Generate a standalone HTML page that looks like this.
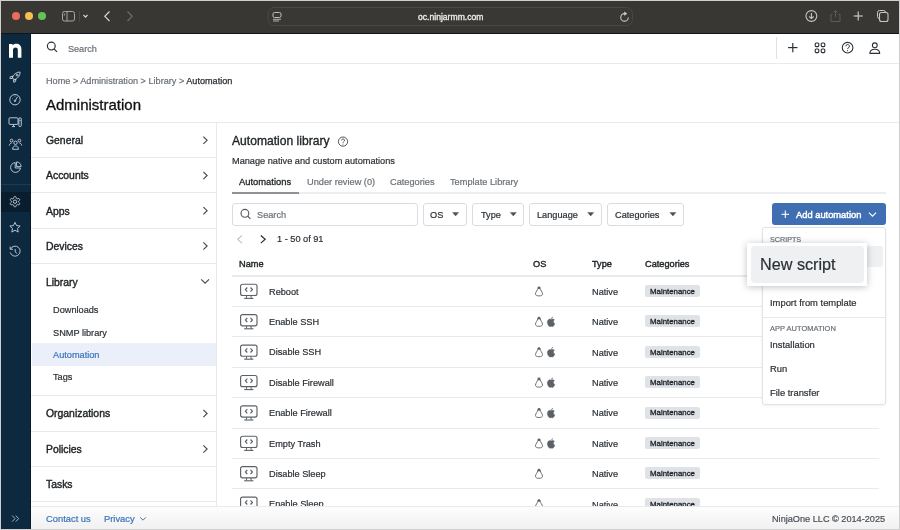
<!DOCTYPE html>
<html><head><meta charset="utf-8">
<style>
*{box-sizing:border-box;margin:0;padding:0}
html,body{width:900px;height:530px;overflow:hidden;background:#fff}
body{position:relative;font-family:"Liberation Sans",sans-serif;color:#23272b}
.a{position:absolute}
.t{will-change:transform;position:absolute;white-space:nowrap;line-height:1;-webkit-text-stroke:0.2px currentColor}
svg{position:absolute;overflow:visible}
</style></head>
<body>
<div class="a" style="left:0px;top:0px;width:900px;height:530px;background:#cfcfcf;"></div>
<div class="a" style="left:1px;top:1px;width:898px;height:528px;background:#fff;"></div>
<div class="a" style="left:1px;top:1px;width:898px;height:32px;background:#383734;"></div>
<div class="a" style="left:1px;top:33px;width:898px;height:1px;background:#0b1621;"></div>
<div class="a" style="left:12.4px;top:12.4px;width:8px;height:8px;border-radius:50%;background:#ec6a5e"></div>
<div class="a" style="left:25.1px;top:12.4px;width:8px;height:8px;border-radius:50%;background:#f4bf4f"></div>
<div class="a" style="left:37.9px;top:12.4px;width:8px;height:8px;border-radius:50%;background:#61c454"></div>
<svg style="left:0px;top:0px" width="900" height="33" viewBox="0 0 900 33">
 <rect x="62.5" y="11.5" width="12" height="9.5" rx="2" fill="none" stroke="#a9a7a4" stroke-width="1"/>
 <line x1="67" y1="11.5" x2="67" y2="21" stroke="#a9a7a4" stroke-width="1"/>
 <line x1="64.3" y1="13.5" x2="64.3" y2="15.5" stroke="#a9a7a4" stroke-width="1"/>
 <line x1="79.5" y1="11" x2="79.5" y2="22" stroke="#4a4846" stroke-width="1"/>
 <polyline points="83.5,15 85.5,17.2 87.5,15" fill="none" stroke="#d8d6d3" stroke-width="1.2"/>
 <polyline points="109.5,11.5 104.8,16.3 109.5,21" fill="none" stroke="#d8d6d3" stroke-width="1.2"/>
 <polyline points="127.5,11.5 132.2,16.3 127.5,21" fill="none" stroke="#6e6c69" stroke-width="1.2"/>
 <rect x="268" y="7.5" width="364.5" height="18" rx="6" fill="#3a3836" stroke="#4a4846" stroke-width="1"/>
 <rect x="273" y="12.5" width="8" height="5" rx="1.5" fill="none" stroke="#bdbbb8" stroke-width="1"/>
 <line x1="273" y1="19.3" x2="281" y2="19.3" stroke="#bdbbb8" stroke-width="0.9"/>
 <line x1="273" y1="21" x2="279" y2="21" stroke="#bdbbb8" stroke-width="0.9"/>
 <path d="M628.25,17.4 A3.75,3.75 0 1 1 624.5,13.65" fill="none" stroke="#c9c7c4" stroke-width="1.1"/>
 <path d="M624.2,11.6 L627.2,13.65 L624.2,15.7 z" fill="#d5d3d0"/>
 <circle cx="811.4" cy="16" r="5.4" fill="none" stroke="#c9c7c4" stroke-width="1.1"/>
 <line x1="811.4" y1="13" x2="811.4" y2="18.5" stroke="#c9c7c4" stroke-width="1.1"/>
 <polyline points="809.2,16.5 811.4,18.6 813.6,16.5" fill="none" stroke="#c9c7c4" stroke-width="1.1"/>
 <path d="M832.5,14.5 h-1.5 v7 h9 v-7 h-1.5" fill="none" stroke="#5e5c59" stroke-width="1"/>
 <line x1="835.5" y1="10.5" x2="835.5" y2="17" stroke="#5e5c59" stroke-width="1"/>
 <polyline points="833.5,12.5 835.5,10.5 837.5,12.5" fill="none" stroke="#5e5c59" stroke-width="1"/>
 <line x1="858.2" y1="11.5" x2="858.2" y2="20.5" stroke="#c9c7c4" stroke-width="1.2"/>
 <line x1="853.7" y1="16" x2="862.7" y2="16" stroke="#c9c7c4" stroke-width="1.2"/>
 <rect x="877.5" y="10.5" width="8" height="8" rx="2" fill="none" stroke="#c9c7c4" stroke-width="1"/>
 <rect x="879.5" y="12.5" width="8.5" height="9" rx="2" fill="#383734" stroke="#c9c7c4" stroke-width="1.1"/>
</svg>
<div class="t" style="left:418.00px;top:13px;font-size:8.6px;color:#f0efed;font-weight:400;-webkit-text-stroke:0.3px #f0efed">oc.ninjarmm.com</div>
<div class="a" style="left:1px;top:34px;width:29px;height:495px;background:#0c2940;"></div>
<div class="a" style="left:30px;top:34px;width:1px;height:495px;background:#08192a;"></div>
<div class="a" style="left:1px;top:184px;width:30px;height:1px;background:#1d3a52;"></div>
<div class="a" style="left:1px;top:192px;width:30px;height:20px;background:#081d2e;"></div>
<div class="a" style="left:32px;top:63px;width:867px;height:1px;background:#e8eaed;"></div>
<div class="t" style="left:68.00px;top:45px;font-size:9.1px;color:#6a7077;font-weight:400;">Search</div>
<div class="a" style="left:776px;top:37px;width:1px;height:22px;background:#dfe2e5;"></div>
<div class="t" style="left:46.00px;top:77px;font-size:9.15px;color:#6a7077;font-weight:400;">Home &gt; Administration &gt; Library &gt; <span style="color:#2b3035;-webkit-text-stroke:0.25px #2b3035">Automation</span></div>
<div class="t" style="left:46.00px;top:97px;font-size:15px;color:#111;font-weight:400;-webkit-text-stroke:0.3px #111">Administration</div>
<div class="a" style="left:31px;top:122px;width:868px;height:1px;background:#e8eaed;"></div>
<div class="a" style="left:216px;top:123px;width:1px;height:383px;background:#e8eaed;"></div>
<div class="t" style="left:45.60px;top:136px;font-size:10.4px;color:#1f2326;font-weight:400;-webkit-text-stroke:0.4px #1f2326">General</div>
<div class="a" style="left:31px;top:122px;width:185px;height:1px;background:#e8eaed;"></div>
<div class="t" style="left:45.60px;top:171px;font-size:10.4px;color:#1f2326;font-weight:400;-webkit-text-stroke:0.4px #1f2326">Accounts</div>
<div class="a" style="left:31px;top:157px;width:185px;height:1px;background:#e8eaed;"></div>
<div class="t" style="left:45.60px;top:207px;font-size:10.4px;color:#1f2326;font-weight:400;-webkit-text-stroke:0.4px #1f2326">Apps</div>
<div class="a" style="left:31px;top:192px;width:185px;height:1px;background:#e8eaed;"></div>
<div class="t" style="left:45.60px;top:242px;font-size:10.4px;color:#1f2326;font-weight:400;-webkit-text-stroke:0.4px #1f2326">Devices</div>
<div class="a" style="left:31px;top:228px;width:185px;height:1px;background:#e8eaed;"></div>
<div class="t" style="left:45.60px;top:278px;font-size:10.4px;color:#1f2326;font-weight:400;-webkit-text-stroke:0.4px #1f2326">Library</div>
<div class="a" style="left:31px;top:263px;width:185px;height:1px;background:#e8eaed;"></div>
<div class="a" style="left:31px;top:395px;width:185px;height:1px;background:#e8eaed;"></div>
<div class="a" style="left:32px;top:343px;width:184px;height:23px;background:#eaeff9;"></div>
<div class="t" style="left:53.20px;top:306px;font-size:9.2px;color:#2b3035;font-weight:400;">Downloads</div>
<div class="t" style="left:53.20px;top:329px;font-size:9.2px;color:#2b3035;font-weight:400;">SNMP library</div>
<div class="t" style="left:53.20px;top:351px;font-size:9.2px;color:#3b73b9;font-weight:400;">Automation</div>
<div class="t" style="left:53.20px;top:373px;font-size:9.2px;color:#2b3035;font-weight:400;">Tags</div>
<div class="t" style="left:45.60px;top:409px;font-size:10.4px;color:#1f2326;font-weight:400;-webkit-text-stroke:0.4px #1f2326">Organizations</div>
<div class="a" style="left:31px;top:395px;width:185px;height:1px;background:#e8eaed;"></div>
<div class="t" style="left:45.60px;top:445px;font-size:10.4px;color:#1f2326;font-weight:400;-webkit-text-stroke:0.4px #1f2326">Policies</div>
<div class="a" style="left:31px;top:431px;width:185px;height:1px;background:#e8eaed;"></div>
<div class="t" style="left:45.60px;top:480px;font-size:10.4px;color:#1f2326;font-weight:400;-webkit-text-stroke:0.4px #1f2326">Tasks</div>
<div class="a" style="left:31px;top:466px;width:185px;height:1px;background:#e8eaed;"></div>
<div class="a" style="left:31px;top:501px;width:185px;height:1px;background:#e8eaed;"></div>
<div class="t" style="left:232.00px;top:135px;font-size:12.1px;color:#1f2326;font-weight:400;-webkit-text-stroke:0.35px #1f2326">Automation library</div>
<svg style="left:0px;top:0px" width="900" height="530" viewBox="0 0 900 530"><circle cx="343" cy="141.6" r="4.6" fill="none" stroke="#3d4247" stroke-width="0.9"/><path d="M341.6,140.4 a1.45,1.45 0 1 1 2.1,1.3 c-0.5,0.25 -0.7,0.5 -0.7,1" fill="none" stroke="#3d4247" stroke-width="0.85"/><circle cx="343" cy="144" r="0.5" fill="#3d4247"/></svg>
<div class="t" style="left:232.00px;top:157px;font-size:9.2px;color:#2b3035;font-weight:400;">Manage native and custom automations</div>
<div class="a" style="left:232px;top:192px;width:654px;height:2px;background:#eceef0;"></div>
<div class="a" style="left:232px;top:192px;width:67px;height:2px;background:#8f9296;"></div>
<div class="t" style="left:239.20px;top:177px;font-size:9.4px;color:#1f2326;font-weight:400;-webkit-text-stroke:0.3px #1f2326">Automations</div>
<div class="t" style="left:306.70px;top:178px;font-size:9.23px;color:#6b7177;font-weight:400;">Under review (0)</div>
<div class="t" style="left:390.40px;top:178px;font-size:9.23px;color:#6b7177;font-weight:400;">Categories</div>
<div class="t" style="left:450.40px;top:178px;font-size:9.23px;color:#6b7177;font-weight:400;">Template Library</div>
<div class="a" style="left:232px;top:203px;width:185.5px;height:22.5px;background:#fff;border:1px solid #d9dde1;border-radius:3px"></div>
<div class="a" style="left:422.7px;top:203px;width:44.0px;height:22.5px;background:#fff;border:1px solid #d9dde1;border-radius:3px"></div>
<div class="a" style="left:472.2px;top:203px;width:51.599999999999966px;height:22.5px;background:#fff;border:1px solid #d9dde1;border-radius:3px"></div>
<div class="a" style="left:529.3px;top:203px;width:72.30000000000007px;height:22.5px;background:#fff;border:1px solid #d9dde1;border-radius:3px"></div>
<div class="a" style="left:607.3px;top:203px;width:76.5px;height:22.5px;background:#fff;border:1px solid #d9dde1;border-radius:3px"></div>
<svg style="left:0px;top:0px" width="900" height="530" viewBox="0 0 900 530"><circle cx="244.9" cy="213.3" r="3.9" fill="none" stroke="#50565c" stroke-width="1.1"/><line x1="247.7" y1="216.1" x2="250.4" y2="218.9" stroke="#50565c" stroke-width="1.2"/></svg>
<div class="t" style="left:256.80px;top:211px;font-size:9.2px;color:#6b7177;font-weight:400;">Search</div>
<div class="t" style="left:430.40px;top:211px;font-size:9.2px;color:#2b3035;font-weight:400;">OS</div>
<svg style="left:0px;top:0px" width="900" height="530" viewBox="0 0 900 530"><path d="M452.6,212.6 h6 l-3,3.4 z" fill="#4a5056" stroke="#4a5056" stroke-width="0.4" stroke-linejoin="round"/></svg>
<div class="t" style="left:480.50px;top:211px;font-size:9.2px;color:#2b3035;font-weight:400;">Type</div>
<svg style="left:0px;top:0px" width="900" height="530" viewBox="0 0 900 530"><path d="M510.29999999999995,212.6 h6 l-3,3.4 z" fill="#4a5056" stroke="#4a5056" stroke-width="0.4" stroke-linejoin="round"/></svg>
<div class="t" style="left:537.30px;top:211px;font-size:9.2px;color:#2b3035;font-weight:400;">Language</div>
<svg style="left:0px;top:0px" width="900" height="530" viewBox="0 0 900 530"><path d="M587.7,212.6 h6 l-3,3.4 z" fill="#4a5056" stroke="#4a5056" stroke-width="0.4" stroke-linejoin="round"/></svg>
<div class="t" style="left:615.10px;top:211px;font-size:9.2px;color:#2b3035;font-weight:400;">Categories</div>
<svg style="left:0px;top:0px" width="900" height="530" viewBox="0 0 900 530"><path d="M669.9,212.6 h6 l-3,3.4 z" fill="#4a5056" stroke="#4a5056" stroke-width="0.4" stroke-linejoin="round"/></svg>
<div class="a" style="left:772px;top:203.3px;width:114px;height:22px;background:#3f6fb2;border-radius:3px"></div>
<svg style="left:0px;top:0px" width="900" height="530" viewBox="0 0 900 530"><line x1="785.3" y1="210.6" x2="785.3" y2="218" stroke="#fff" stroke-width="1.1"/><line x1="781.6" y1="214.3" x2="789" y2="214.3" stroke="#fff" stroke-width="1.1"/><polyline points="868.9,212.6 872.5,216.2 876.1,212.6" fill="none" stroke="#fff" stroke-width="1.1"/></svg>
<div class="t" style="left:796.00px;top:211px;font-size:9.33px;color:#fff;font-weight:400;-webkit-text-stroke:0.45px #fff">Add automation</div>
<svg style="left:0px;top:0px" width="900" height="530" viewBox="0 0 900 530"><polyline points="242,235.5 237.6,239.3 242,243.1" fill="none" stroke="#a3a9af" stroke-width="1"/><polyline points="260.8,235.5 265.2,239.3 260.8,243.1" fill="none" stroke="#2b2f33" stroke-width="1.2"/></svg>
<div class="t" style="left:276.50px;top:235px;font-size:9.2px;color:#2b3035;font-weight:400;">1 - 50 of 91</div>
<div class="t" style="left:239.00px;top:260px;font-size:9.2px;color:#1f2326;font-weight:400;-webkit-text-stroke:0.4px #1f2326">Name</div>
<div class="t" style="left:532.90px;top:260px;font-size:9.2px;color:#1f2326;font-weight:400;-webkit-text-stroke:0.4px #1f2326">OS</div>
<div class="t" style="left:591.60px;top:260px;font-size:9.2px;color:#1f2326;font-weight:400;-webkit-text-stroke:0.4px #1f2326">Type</div>
<div class="t" style="left:644.90px;top:260px;font-size:9.2px;color:#1f2326;font-weight:400;-webkit-text-stroke:0.4px #1f2326">Categories</div>
<div class="a" style="left:232px;top:275px;width:647px;height:2px;background:#e8eaed;"></div>
<div class="a" style="left:232px;top:306px;width:647px;height:1px;background:#e8eaed;"></div>
<div class="t" style="left:268.70px;top:288px;font-size:9.2px;color:#2b3035;font-weight:400;">Reboot</div>
<div class="t" style="left:591.70px;top:288px;font-size:9.2px;color:#2b3035;font-weight:400;">Native</div>
<div class="a" style="left:645px;top:285px;width:55px;height:12px;background:#dfe3e8;border-radius:2px"></div>
<div class="t" style="left:650.00px;top:288px;font-size:7.85px;color:#1c2024;font-weight:400;-webkit-text-stroke:0.3px #1c2024">Maintenance</div>
<svg style="left:0px;top:0px" width="900" height="530" viewBox="0 0 900 530"><rect x="240.6" y="284.25" width="16.4" height="11.2" rx="2" fill="none" stroke="#5b6167" stroke-width="1.15"/><polyline points="247.3,287.50 245.4,289.60 247.3,291.70" fill="none" stroke="#5b6167" stroke-width="1.2"/><polyline points="250.5,287.50 252.4,289.60 250.5,291.70" fill="none" stroke="#5b6167" stroke-width="1.2"/><path d="M246.9,295.40 L246.2,298.20 M250.7,295.40 L251.4,298.20" fill="none" stroke="#5b6167" stroke-width="1"/><line x1="244.2" y1="298.40" x2="253.4" y2="298.40" stroke="#5b6167" stroke-width="1.1"/></svg>
<svg style="left:0px;top:0px" width="900" height="530" viewBox="0 0 900 530"><ellipse cx="539" cy="287.8" rx="1.5" ry="1.4" fill="#5b6167"/><path d="M537.7,288.4 C537.7,290.2 535.5,291.7 535.5,293.9 C535.5,295.4 537,295.9 539,295.9 C541,295.9 542.5,295.4 542.5,293.9 C542.5,291.7 540.3,290.2 540.3,288.4" fill="none" stroke="#5b6167" stroke-width="0.9"/></svg>
<div class="a" style="left:232px;top:336px;width:647px;height:1px;background:#e8eaed;"></div>
<div class="t" style="left:268.70px;top:318px;font-size:9.2px;color:#2b3035;font-weight:400;">Enable SSH</div>
<div class="t" style="left:591.70px;top:318px;font-size:9.2px;color:#2b3035;font-weight:400;">Native</div>
<div class="a" style="left:645px;top:315px;width:55px;height:12px;background:#dfe3e8;border-radius:2px"></div>
<div class="t" style="left:650.00px;top:318px;font-size:7.85px;color:#1c2024;font-weight:400;-webkit-text-stroke:0.3px #1c2024">Maintenance</div>
<svg style="left:0px;top:0px" width="900" height="530" viewBox="0 0 900 530"><rect x="240.6" y="314.65" width="16.4" height="11.2" rx="2" fill="none" stroke="#5b6167" stroke-width="1.15"/><polyline points="247.3,317.90 245.4,320.00 247.3,322.10" fill="none" stroke="#5b6167" stroke-width="1.2"/><polyline points="250.5,317.90 252.4,320.00 250.5,322.10" fill="none" stroke="#5b6167" stroke-width="1.2"/><path d="M246.9,325.80 L246.2,328.60 M250.7,325.80 L251.4,328.60" fill="none" stroke="#5b6167" stroke-width="1"/><line x1="244.2" y1="328.80" x2="253.4" y2="328.80" stroke="#5b6167" stroke-width="1.1"/></svg>
<svg style="left:0px;top:0px" width="900" height="530" viewBox="0 0 900 530"><ellipse cx="539" cy="318.2" rx="1.5" ry="1.4" fill="#5b6167"/><path d="M537.7,318.8 C537.7,320.6 535.5,322.1 535.5,324.3 C535.5,325.8 537,326.3 539,326.3 C541,326.3 542.5,325.8 542.5,324.3 C542.5,322.1 540.3,320.6 540.3,318.8" fill="none" stroke="#5b6167" stroke-width="0.9"/></svg>
<svg style="left:0px;top:0px" width="900" height="530" viewBox="0 0 900 530"><path d="M551.4,319.4 c0.9,-0.6 2.2,-0.5 3,0.3 c-1.6,1 -1.3,3.3 0.4,4 c-0.5,1.4 -1.4,2.9 -2.5,2.9 c-0.6,0 -0.8,-0.3 -1.1,-0.3 c-0.3,0 -0.6,0.3 -1.1,0.3 c-1.3,0 -2.7,-2.4 -2.7,-4.4 c0,-2.4 1.7,-3.2 2.6,-3.2 c0.5,0 0.9,0.35 1.4,0.4 z M551.5,318.9 c0,-0.9 0.6,-1.8 1.5,-2" fill="#5b6167" stroke="#5b6167" stroke-width="0.5"/></svg>
<div class="a" style="left:232px;top:367px;width:647px;height:1px;background:#e8eaed;"></div>
<div class="t" style="left:268.70px;top:348px;font-size:9.2px;color:#2b3035;font-weight:400;">Disable SSH</div>
<div class="t" style="left:591.70px;top:349px;font-size:9.2px;color:#2b3035;font-weight:400;">Native</div>
<div class="a" style="left:645px;top:346px;width:55px;height:12px;background:#dfe3e8;border-radius:2px"></div>
<div class="t" style="left:650.00px;top:349px;font-size:7.85px;color:#1c2024;font-weight:400;-webkit-text-stroke:0.3px #1c2024">Maintenance</div>
<svg style="left:0px;top:0px" width="900" height="530" viewBox="0 0 900 530"><rect x="240.6" y="345.05" width="16.4" height="11.2" rx="2" fill="none" stroke="#5b6167" stroke-width="1.15"/><polyline points="247.3,348.30 245.4,350.40 247.3,352.50" fill="none" stroke="#5b6167" stroke-width="1.2"/><polyline points="250.5,348.30 252.4,350.40 250.5,352.50" fill="none" stroke="#5b6167" stroke-width="1.2"/><path d="M246.9,356.20 L246.2,359.00 M250.7,356.20 L251.4,359.00" fill="none" stroke="#5b6167" stroke-width="1"/><line x1="244.2" y1="359.20" x2="253.4" y2="359.20" stroke="#5b6167" stroke-width="1.1"/></svg>
<svg style="left:0px;top:0px" width="900" height="530" viewBox="0 0 900 530"><ellipse cx="539" cy="348.6" rx="1.5" ry="1.4" fill="#5b6167"/><path d="M537.7,349.2 C537.7,351.0 535.5,352.5 535.5,354.7 C535.5,356.2 537,356.7 539,356.7 C541,356.7 542.5,356.2 542.5,354.7 C542.5,352.5 540.3,351.0 540.3,349.2" fill="none" stroke="#5b6167" stroke-width="0.9"/></svg>
<svg style="left:0px;top:0px" width="900" height="530" viewBox="0 0 900 530"><path d="M551.4,349.8 c0.9,-0.6 2.2,-0.5 3,0.3 c-1.6,1 -1.3,3.3 0.4,4 c-0.5,1.4 -1.4,2.9 -2.5,2.9 c-0.6,0 -0.8,-0.3 -1.1,-0.3 c-0.3,0 -0.6,0.3 -1.1,0.3 c-1.3,0 -2.7,-2.4 -2.7,-4.4 c0,-2.4 1.7,-3.2 2.6,-3.2 c0.5,0 0.9,0.35 1.4,0.4 z M551.5,349.3 c0,-0.9 0.6,-1.8 1.5,-2" fill="#5b6167" stroke="#5b6167" stroke-width="0.5"/></svg>
<div class="a" style="left:232px;top:397px;width:647px;height:1px;background:#e8eaed;"></div>
<div class="t" style="left:268.70px;top:379px;font-size:9.2px;color:#2b3035;font-weight:400;">Disable Firewall</div>
<div class="t" style="left:591.70px;top:379px;font-size:9.2px;color:#2b3035;font-weight:400;">Native</div>
<div class="a" style="left:645px;top:376px;width:55px;height:12px;background:#dfe3e8;border-radius:2px"></div>
<div class="t" style="left:650.00px;top:379px;font-size:7.85px;color:#1c2024;font-weight:400;-webkit-text-stroke:0.3px #1c2024">Maintenance</div>
<svg style="left:0px;top:0px" width="900" height="530" viewBox="0 0 900 530"><rect x="240.6" y="375.45" width="16.4" height="11.2" rx="2" fill="none" stroke="#5b6167" stroke-width="1.15"/><polyline points="247.3,378.70 245.4,380.80 247.3,382.90" fill="none" stroke="#5b6167" stroke-width="1.2"/><polyline points="250.5,378.70 252.4,380.80 250.5,382.90" fill="none" stroke="#5b6167" stroke-width="1.2"/><path d="M246.9,386.60 L246.2,389.40 M250.7,386.60 L251.4,389.40" fill="none" stroke="#5b6167" stroke-width="1"/><line x1="244.2" y1="389.60" x2="253.4" y2="389.60" stroke="#5b6167" stroke-width="1.1"/></svg>
<svg style="left:0px;top:0px" width="900" height="530" viewBox="0 0 900 530"><ellipse cx="539" cy="379.0" rx="1.5" ry="1.4" fill="#5b6167"/><path d="M537.7,379.6 C537.7,381.4 535.5,382.9 535.5,385.1 C535.5,386.6 537,387.1 539,387.1 C541,387.1 542.5,386.6 542.5,385.1 C542.5,382.9 540.3,381.4 540.3,379.6" fill="none" stroke="#5b6167" stroke-width="0.9"/></svg>
<svg style="left:0px;top:0px" width="900" height="530" viewBox="0 0 900 530"><path d="M551.4,380.2 c0.9,-0.6 2.2,-0.5 3,0.3 c-1.6,1 -1.3,3.3 0.4,4 c-0.5,1.4 -1.4,2.9 -2.5,2.9 c-0.6,0 -0.8,-0.3 -1.1,-0.3 c-0.3,0 -0.6,0.3 -1.1,0.3 c-1.3,0 -2.7,-2.4 -2.7,-4.4 c0,-2.4 1.7,-3.2 2.6,-3.2 c0.5,0 0.9,0.35 1.4,0.4 z M551.5,379.7 c0,-0.9 0.6,-1.8 1.5,-2" fill="#5b6167" stroke="#5b6167" stroke-width="0.5"/></svg>
<div class="a" style="left:232px;top:428px;width:647px;height:1px;background:#e8eaed;"></div>
<div class="t" style="left:268.70px;top:409px;font-size:9.2px;color:#2b3035;font-weight:400;">Enable Firewall</div>
<div class="t" style="left:591.70px;top:409px;font-size:9.2px;color:#2b3035;font-weight:400;">Native</div>
<div class="a" style="left:645px;top:407px;width:55px;height:12px;background:#dfe3e8;border-radius:2px"></div>
<div class="t" style="left:650.00px;top:409px;font-size:7.85px;color:#1c2024;font-weight:400;-webkit-text-stroke:0.3px #1c2024">Maintenance</div>
<svg style="left:0px;top:0px" width="900" height="530" viewBox="0 0 900 530"><rect x="240.6" y="405.85" width="16.4" height="11.2" rx="2" fill="none" stroke="#5b6167" stroke-width="1.15"/><polyline points="247.3,409.10 245.4,411.20 247.3,413.30" fill="none" stroke="#5b6167" stroke-width="1.2"/><polyline points="250.5,409.10 252.4,411.20 250.5,413.30" fill="none" stroke="#5b6167" stroke-width="1.2"/><path d="M246.9,417.00 L246.2,419.80 M250.7,417.00 L251.4,419.80" fill="none" stroke="#5b6167" stroke-width="1"/><line x1="244.2" y1="420.00" x2="253.4" y2="420.00" stroke="#5b6167" stroke-width="1.1"/></svg>
<svg style="left:0px;top:0px" width="900" height="530" viewBox="0 0 900 530"><ellipse cx="539" cy="409.4" rx="1.5" ry="1.4" fill="#5b6167"/><path d="M537.7,410.0 C537.7,411.8 535.5,413.3 535.5,415.5 C535.5,417.0 537,417.5 539,417.5 C541,417.5 542.5,417.0 542.5,415.5 C542.5,413.3 540.3,411.8 540.3,410.0" fill="none" stroke="#5b6167" stroke-width="0.9"/></svg>
<svg style="left:0px;top:0px" width="900" height="530" viewBox="0 0 900 530"><path d="M551.4,410.6 c0.9,-0.6 2.2,-0.5 3,0.3 c-1.6,1 -1.3,3.3 0.4,4 c-0.5,1.4 -1.4,2.9 -2.5,2.9 c-0.6,0 -0.8,-0.3 -1.1,-0.3 c-0.3,0 -0.6,0.3 -1.1,0.3 c-1.3,0 -2.7,-2.4 -2.7,-4.4 c0,-2.4 1.7,-3.2 2.6,-3.2 c0.5,0 0.9,0.35 1.4,0.4 z M551.5,410.1 c0,-0.9 0.6,-1.8 1.5,-2" fill="#5b6167" stroke="#5b6167" stroke-width="0.5"/></svg>
<div class="a" style="left:232px;top:458px;width:647px;height:1px;background:#e8eaed;"></div>
<div class="t" style="left:268.70px;top:440px;font-size:9.2px;color:#2b3035;font-weight:400;">Empty Trash</div>
<div class="t" style="left:591.70px;top:440px;font-size:9.2px;color:#2b3035;font-weight:400;">Native</div>
<div class="a" style="left:645px;top:437px;width:55px;height:12px;background:#dfe3e8;border-radius:2px"></div>
<div class="t" style="left:650.00px;top:440px;font-size:7.85px;color:#1c2024;font-weight:400;-webkit-text-stroke:0.3px #1c2024">Maintenance</div>
<svg style="left:0px;top:0px" width="900" height="530" viewBox="0 0 900 530"><rect x="240.6" y="436.25" width="16.4" height="11.2" rx="2" fill="none" stroke="#5b6167" stroke-width="1.15"/><polyline points="247.3,439.50 245.4,441.60 247.3,443.70" fill="none" stroke="#5b6167" stroke-width="1.2"/><polyline points="250.5,439.50 252.4,441.60 250.5,443.70" fill="none" stroke="#5b6167" stroke-width="1.2"/><path d="M246.9,447.40 L246.2,450.20 M250.7,447.40 L251.4,450.20" fill="none" stroke="#5b6167" stroke-width="1"/><line x1="244.2" y1="450.40" x2="253.4" y2="450.40" stroke="#5b6167" stroke-width="1.1"/></svg>
<svg style="left:0px;top:0px" width="900" height="530" viewBox="0 0 900 530"><ellipse cx="539" cy="439.8" rx="1.5" ry="1.4" fill="#5b6167"/><path d="M537.7,440.4 C537.7,442.2 535.5,443.7 535.5,445.9 C535.5,447.4 537,447.9 539,447.9 C541,447.9 542.5,447.4 542.5,445.9 C542.5,443.7 540.3,442.2 540.3,440.4" fill="none" stroke="#5b6167" stroke-width="0.9"/></svg>
<svg style="left:0px;top:0px" width="900" height="530" viewBox="0 0 900 530"><path d="M551.4,441.0 c0.9,-0.6 2.2,-0.5 3,0.3 c-1.6,1 -1.3,3.3 0.4,4 c-0.5,1.4 -1.4,2.9 -2.5,2.9 c-0.6,0 -0.8,-0.3 -1.1,-0.3 c-0.3,0 -0.6,0.3 -1.1,0.3 c-1.3,0 -2.7,-2.4 -2.7,-4.4 c0,-2.4 1.7,-3.2 2.6,-3.2 c0.5,0 0.9,0.35 1.4,0.4 z M551.5,440.5 c0,-0.9 0.6,-1.8 1.5,-2" fill="#5b6167" stroke="#5b6167" stroke-width="0.5"/></svg>
<div class="a" style="left:232px;top:488px;width:647px;height:1px;background:#e8eaed;"></div>
<div class="t" style="left:268.70px;top:470px;font-size:9.2px;color:#2b3035;font-weight:400;">Disable Sleep</div>
<div class="t" style="left:591.70px;top:470px;font-size:9.2px;color:#2b3035;font-weight:400;">Native</div>
<div class="a" style="left:645px;top:467px;width:55px;height:12px;background:#dfe3e8;border-radius:2px"></div>
<div class="t" style="left:650.00px;top:470px;font-size:7.85px;color:#1c2024;font-weight:400;-webkit-text-stroke:0.3px #1c2024">Maintenance</div>
<svg style="left:0px;top:0px" width="900" height="530" viewBox="0 0 900 530"><rect x="240.6" y="466.65" width="16.4" height="11.2" rx="2" fill="none" stroke="#5b6167" stroke-width="1.15"/><polyline points="247.3,469.90 245.4,472.00 247.3,474.10" fill="none" stroke="#5b6167" stroke-width="1.2"/><polyline points="250.5,469.90 252.4,472.00 250.5,474.10" fill="none" stroke="#5b6167" stroke-width="1.2"/><path d="M246.9,477.80 L246.2,480.60 M250.7,477.80 L251.4,480.60" fill="none" stroke="#5b6167" stroke-width="1"/><line x1="244.2" y1="480.80" x2="253.4" y2="480.80" stroke="#5b6167" stroke-width="1.1"/></svg>
<svg style="left:0px;top:0px" width="900" height="530" viewBox="0 0 900 530"><ellipse cx="539" cy="470.2" rx="1.5" ry="1.4" fill="#5b6167"/><path d="M537.7,470.8 C537.7,472.6 535.5,474.1 535.5,476.3 C535.5,477.8 537,478.3 539,478.3 C541,478.3 542.5,477.8 542.5,476.3 C542.5,474.1 540.3,472.6 540.3,470.8" fill="none" stroke="#5b6167" stroke-width="0.9"/></svg>
<div class="a" style="left:232px;top:519px;width:647px;height:1px;background:#e8eaed;"></div>
<div class="t" style="left:268.70px;top:500px;font-size:9.2px;color:#2b3035;font-weight:400;">Enable Sleep</div>
<div class="t" style="left:591.70px;top:501px;font-size:9.2px;color:#2b3035;font-weight:400;">Native</div>
<div class="a" style="left:645px;top:498px;width:55px;height:12px;background:#dfe3e8;border-radius:2px"></div>
<div class="t" style="left:650.00px;top:501px;font-size:7.85px;color:#1c2024;font-weight:400;-webkit-text-stroke:0.3px #1c2024">Maintenance</div>
<svg style="left:0px;top:0px" width="900" height="530" viewBox="0 0 900 530"><rect x="240.6" y="497.05" width="16.4" height="11.2" rx="2" fill="none" stroke="#5b6167" stroke-width="1.15"/><polyline points="247.3,500.30 245.4,502.40 247.3,504.50" fill="none" stroke="#5b6167" stroke-width="1.2"/><polyline points="250.5,500.30 252.4,502.40 250.5,504.50" fill="none" stroke="#5b6167" stroke-width="1.2"/><path d="M246.9,508.20 L246.2,511.00 M250.7,508.20 L251.4,511.00" fill="none" stroke="#5b6167" stroke-width="1"/><line x1="244.2" y1="511.20" x2="253.4" y2="511.20" stroke="#5b6167" stroke-width="1.1"/></svg>
<svg style="left:0px;top:0px" width="900" height="530" viewBox="0 0 900 530"><ellipse cx="539" cy="500.6" rx="1.5" ry="1.4" fill="#5b6167"/><path d="M537.7,501.2 C537.7,503.0 535.5,504.5 535.5,506.7 C535.5,508.2 537,508.7 539,508.7 C541,508.7 542.5,508.2 542.5,506.7 C542.5,504.5 540.3,503.0 540.3,501.2" fill="none" stroke="#5b6167" stroke-width="0.9"/></svg>
<svg style="left:0px;top:0px" width="900" height="530" viewBox="0 0 900 530"><path d="M9,44 h3.5 v1.4 c0.8,-1.1 2.1,-1.7 3.6,-1.7 c3.2,0 5.3,2 5.3,5.3 v8.7 h-3.6 v-7.9 c0,-1.6 -0.9,-2.4 -2.3,-2.4 c-1.5,0 -2.5,0.9 -2.5,2.4 v7.9 h-4 z" fill="#fff"/></svg>
<svg style="left:0px;top:0px" width="900" height="530" viewBox="0 0 900 530"><g fill="none" stroke="#ccd4db" stroke-width="0.9" stroke-linejoin="round"><path d="M20.1,72 C16.4,72 13.6,74.2 12.2,77.6 L14.5,79.9 C17.9,78.5 20.1,75.7 20.1,72 z"/><circle cx="17.1" cy="75.1" r="1"/><path d="M12.9,76.3 L10.6,76.5 L9.8,78.3 L12.3,78.6 z"/><path d="M15.8,79.2 L15.6,81.5 L13.8,82.3 L13.5,79.8 z"/></g></svg>
<svg style="left:0px;top:0px" width="900" height="530" viewBox="0 0 900 530"><g fill="none" stroke="#ccd4db" stroke-width="0.9"><circle cx="15" cy="99.7" r="5.2"/><path d="M17.6,96.8 l-2.2,3.4"/><circle cx="15" cy="100.8" r="0.8"/><path d="M12.2,98.2 l0.5,0.4 M15,95.8 v0.7"/></g></svg>
<svg style="left:0px;top:0px" width="900" height="530" viewBox="0 0 900 530"><g fill="none" stroke="#ccd4db" stroke-width="0.9"><rect x="9" y="117.8" width="9" height="6.6" rx="1"/><path d="M12,126.6 h3 M13.5,124.4 v2.2"/><rect x="18.9" y="117.8" width="2.4" height="8.8" rx="1.1"/><path d="M20.1,120 v1"/></g></svg>
<svg style="left:0px;top:0px" width="900" height="530" viewBox="0 0 900 530"><g fill="none" stroke="#ccd4db" stroke-width="0.9"><circle cx="15.5" cy="142.8" r="1.7"/><path d="M12.6,149.3 c0,-2.2 1.3,-3.4 2.9,-3.4 c1.6,0 2.9,1.2 2.9,3.4 z"/><circle cx="11.6" cy="140.6" r="1.4"/><circle cx="19.4" cy="140.6" r="1.4"/><path d="M9.3,145.6 c0,-1.5 1,-2.5 2.3,-2.5 M21.7,145.6 c0,-1.5 -1,-2.5 -2.3,-2.5"/></g></svg>
<svg style="left:0px;top:0px" width="900" height="530" viewBox="0 0 900 530"><g fill="none" stroke="#ccd4db" stroke-width="0.9"><path d="M15.2,162.6 a4.9,4.9 0 1 0 5.2,5.4 h-5.2 z"/><path d="M16.6,161.9 v4.7 h4.5 a4.5,4.5 0 0 0 -4.5,-4.7 z"/></g></svg>
<svg style="left:0px;top:0px" width="900" height="530" viewBox="0 0 900 530"><g fill="none" stroke="#ccd4db" stroke-width="0.9" stroke-linejoin="round"><path d="M15.00,196.55 L15.34,196.56 L15.67,196.59 L15.94,196.95 L16.13,197.50 L16.24,198.04 L16.36,198.42 L16.57,198.52 L16.77,198.63 L16.97,198.75 L17.16,198.88 L17.55,198.80 L18.08,198.62 L18.64,198.51 L19.09,198.56 L19.28,198.84 L19.46,199.12 L19.62,199.42 L19.76,199.73 L19.58,200.14 L19.20,200.57 L18.79,200.95 L18.52,201.24 L18.54,201.47 L18.55,201.70 L18.54,201.93 L18.52,202.16 L18.79,202.45 L19.20,202.83 L19.58,203.26 L19.76,203.67 L19.62,203.98 L19.46,204.27 L19.28,204.56 L19.09,204.84 L18.64,204.89 L18.08,204.78 L17.55,204.60 L17.16,204.52 L16.97,204.65 L16.77,204.77 L16.57,204.88 L16.36,204.98 L16.24,205.36 L16.13,205.90 L15.94,206.45 L15.67,206.81 L15.34,206.84 L15.00,206.85 L14.66,206.84 L14.33,206.81 L14.06,206.45 L13.87,205.90 L13.76,205.36 L13.64,204.98 L13.43,204.88 L13.23,204.77 L13.03,204.65 L12.84,204.52 L12.45,204.60 L11.92,204.78 L11.36,204.89 L10.91,204.84 L10.72,204.56 L10.54,204.27 L10.38,203.98 L10.24,203.67 L10.42,203.26 L10.80,202.83 L11.21,202.45 L11.48,202.16 L11.46,201.93 L11.45,201.70 L11.46,201.47 L11.48,201.24 L11.21,200.95 L10.80,200.57 L10.42,200.14 L10.24,199.73 L10.38,199.42 L10.54,199.12 L10.72,198.84 L10.91,198.56 L11.36,198.51 L11.92,198.62 L12.45,198.80 L12.84,198.88 L13.03,198.75 L13.22,198.63 L13.43,198.52 L13.64,198.42 L13.76,198.04 L13.87,197.50 L14.06,196.95 L14.33,196.59 L14.66,196.56 z"/><circle cx="15" cy="201.7" r="1.7"/></g></svg>
<svg style="left:0px;top:0px" width="900" height="530" viewBox="0 0 900 530"><path d="M15,222.3 l1.55,3.3 l3.6,0.45 l-2.65,2.45 l0.7,3.55 l-3.2,-1.8 l-3.2,1.8 l0.7,-3.55 l-2.65,-2.45 l3.6,-0.45 z" fill="none" stroke="#ccd4db" stroke-width="0.9" stroke-linejoin="round"/></svg>
<svg style="left:0px;top:0px" width="900" height="530" viewBox="0 0 900 530"><g fill="none" stroke="#ccd4db" stroke-width="0.9"><path d="M10.6,249 a5,5 0 1 1 -0.3,3.5"/><path d="M10.2,246.6 v2.7 h2.7"/><path d="M15.2,249 v3 l2,1.5"/></g></svg>
<div class="a" style="left:8px;top:518px;width:10px;height:2px;background:transparent;"></div>
<svg style="left:0px;top:0px" width="900" height="530" viewBox="0 0 900 530"><g fill="none" stroke="#aab8c5" stroke-width="0.95"><polyline points="12.2,515.6 15,518.6 12.2,521.6"/><polyline points="15.8,515.6 18.6,518.6 15.8,521.6"/></g></svg>
<svg style="left:0px;top:0px" width="900" height="530" viewBox="0 0 900 530"><g fill="none" stroke="#2b3035" stroke-width="1.2"><circle cx="51.3" cy="46.1" r="3.9"/><line x1="54.1" y1="48.9" x2="57" y2="51.8"/></g></svg>
<svg style="left:0px;top:0px" width="900" height="530" viewBox="0 0 900 530"><g fill="none" stroke="#2b3035" stroke-width="1.2"><line x1="792.8" y1="42.9" x2="792.8" y2="52.3"/><line x1="788.1" y1="47.6" x2="797.5" y2="47.6"/></g></svg>
<svg style="left:0px;top:0px" width="900" height="530" viewBox="0 0 900 530"><g fill="none" stroke="#2b3035" stroke-width="1.1"><rect x="815.2" y="43" width="3.6" height="3.6" rx="1"/><rect x="821.2" y="43" width="3.6" height="3.6" rx="1"/><rect x="815.2" y="49" width="3.6" height="3.6" rx="1"/><rect x="821.2" y="49" width="3.6" height="3.6" rx="1"/></g></svg>
<svg style="left:0px;top:0px" width="900" height="530" viewBox="0 0 900 530"><g fill="none" stroke="#2b3035" stroke-width="1.1"><circle cx="847.6" cy="47.7" r="5.3"/><path d="M845.9,46.3 a1.75,1.75 0 1 1 2.6,1.5 c-0.6,0.3 -0.9,0.6 -0.9,1.2" stroke-width="1"/></g><circle cx="847.6" cy="50.6" r="0.6" fill="#2b3035"/></svg>
<svg style="left:0px;top:0px" width="900" height="530" viewBox="0 0 900 530"><g fill="none" stroke="#2b3035" stroke-width="1.1"><circle cx="874.8" cy="45.3" r="2.4"/><path d="M869.9,53.4 c0,-2.6 2.2,-4.2 4.9,-4.2 c2.7,0 4.9,1.6 4.9,4.2 z" stroke-linejoin="round"/></g></svg>
<svg style="left:0px;top:0px" width="900" height="530" viewBox="0 0 900 530"><polyline points="203.4,136.7 207.1,140.3 203.4,143.9" fill="none" stroke="#454b51" stroke-width="1.15"/></svg>
<svg style="left:0px;top:0px" width="900" height="530" viewBox="0 0 900 530"><polyline points="203.4,171.9 207.1,175.5 203.4,179.1" fill="none" stroke="#454b51" stroke-width="1.15"/></svg>
<svg style="left:0px;top:0px" width="900" height="530" viewBox="0 0 900 530"><polyline points="203.4,207.1 207.1,210.7 203.4,214.3" fill="none" stroke="#454b51" stroke-width="1.15"/></svg>
<svg style="left:0px;top:0px" width="900" height="530" viewBox="0 0 900 530"><polyline points="203.4,242.4 207.1,246.0 203.4,249.6" fill="none" stroke="#454b51" stroke-width="1.15"/></svg>
<svg style="left:0px;top:0px" width="900" height="530" viewBox="0 0 900 530"><polyline points="203.4,409.9 207.1,413.5 203.4,417.1" fill="none" stroke="#454b51" stroke-width="1.15"/></svg>
<svg style="left:0px;top:0px" width="900" height="530" viewBox="0 0 900 530"><polyline points="203.4,445.4 207.1,449.0 203.4,452.6" fill="none" stroke="#454b51" stroke-width="1.15"/></svg>
<svg style="left:0px;top:0px" width="900" height="530" viewBox="0 0 900 530"><polyline points="201.2,279.4 205.1,283.2 209,279.4" fill="none" stroke="#454b51" stroke-width="1.15"/></svg>
<div class="a" style="left:762px;top:227.3px;width:123.5px;height:178px;background:#fff;border:1px solid #dfe2e6;border-radius:3px;box-shadow:0 1px 3px rgba(0,0,0,0.06)"></div>
<div class="t" style="left:769.90px;top:236px;font-size:7.2px;color:#6b7177;font-weight:400;">SCRIPTS</div>
<div class="a" style="left:763.5px;top:245.5px;width:119px;height:21px;background:#eef0f2;border-radius:2px"></div>
<div class="t" style="left:769.60px;top:298px;font-size:9.4px;color:#2b3035;font-weight:400;">Import from template</div>
<div class="a" style="left:763px;top:316.5px;width:122px;height:1px;background:#e6e8eb;"></div>
<div class="t" style="left:769.90px;top:325px;font-size:7.5px;color:#6b7177;font-weight:400;">APP AUTOMATION</div>
<div class="t" style="left:769.60px;top:340px;font-size:9.4px;color:#2b3035;font-weight:400;">Installation</div>
<div class="t" style="left:769.60px;top:364px;font-size:9.4px;color:#2b3035;font-weight:400;">Run</div>
<div class="t" style="left:769.60px;top:388px;font-size:9.4px;color:#2b3035;font-weight:400;">File transfer</div>
<div class="a" style="left:747px;top:242.8px;width:120px;height:43px;background:#fff;box-shadow:0 1px 7px rgba(0,0,0,0.25)"></div>
<div class="a" style="left:750.8px;top:246.3px;width:113px;height:36.5px;background:#eef0f2;border-radius:4px"></div>
<div class="t" style="left:759.70px;top:256px;font-size:16.2px;color:#2b2f33;font-weight:400;">New script</div>
<div class="a" style="left:31px;top:506px;width:868px;height:1px;background:#e8eaed;"></div>
<div class="a" style="left:31px;top:507px;width:868px;height:22px;background:linear-gradient(#fdfdfd,#f1f1f1);"></div>
<svg style="left:0px;top:0px" width="900" height="530" viewBox="0 0 900 530"><polyline points="140.2,517.4 143,520.2 145.8,517.4" fill="none" stroke="#3b73b9" stroke-width="1"/></svg>
<div class="t" style="left:45.90px;top:515px;font-size:9.37px;color:#3b73b9;font-weight:400;">Contact us</div>
<div class="t" style="left:104.00px;top:515px;font-size:9.37px;color:#3b73b9;font-weight:400;">Privacy</div>
<div class="t" style="left:771.70px;top:515px;font-size:9.16px;color:#4a4f55;font-weight:400;">NinjaOne LLC © 2014-2025</div>
</body></html>
